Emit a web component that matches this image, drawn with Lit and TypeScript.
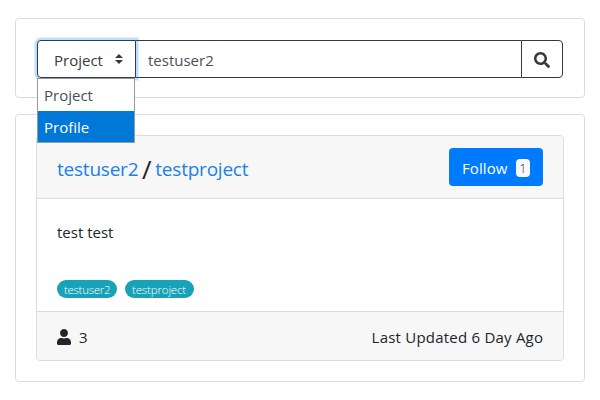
import { LitElement, html, css } from "lit";
import { customElement, property, state } from "lit/decorators.js";
import { classMap } from "lit/directives/class-map.js";

@customElement("search-bar")
class SearchBar extends LitElement {
  @property() query = "";
  @state() private selected = "Project";
  @state() private highlighted = "Profile";
  private options = ["Project", "Profile"];

  static styles = css`
    :host { display: block; }
    .group { display: flex; height: 38px; box-sizing: border-box; position: relative; color: #343a40; }
    .select {
      box-sizing: border-box; width: 99px; height: 38px; position: relative; z-index: 1;
      display: flex; align-items: center; justify-content: space-between;
      padding: 1px 11px 0 16px; border: 1px solid #343a40; border-radius: 4px 0 0 4px;
      background: #fff; box-shadow: 0 0 0 2.5px rgba(0, 123, 255, 0.25);
    }
    .arrows { width: 10px; height: 10px; margin-bottom: 2px; }
    .field {
      box-sizing: border-box; flex: 1; padding: 1px 12px 0; display: flex; align-items: center;
      border: solid #343a40; border-width: 1px 0; color: #495057;
    }
    .search {
      box-sizing: border-box; width: 42px; display: flex; align-items: center; justify-content: center;
      padding-top: 2px; border: 1px solid #343a40; border-radius: 0 4px 4px 0;
    }
    .search svg { width: 16px; height: 16px; }
    .menu {
      position: absolute; left: 0; top: 38px; width: 98px; height: 65px; z-index: 2;
      box-sizing: border-box; border: 1px solid #9299a0; background: #fff;
    }
    .option { height: 32px; line-height: 32px; padding-left: 6px; color: #495057; box-sizing: border-box; }
    .option.active { background: #0078d7; color: #fff; height: 31px; }
  `;

  render() {
    return html`<div class="group">
      <div class="select">
        <span>${this.selected}</span>
        <svg class="arrows" viewBox="0 0 4 5"><path fill="#343a40" d="M2 0L0 2h4zm0 5L0 3h4z" /></svg>
      </div>
      <div class="field"><span>${this.query}</span></div>
      <div class="search">
        <svg viewBox="0 0 512 512"><path fill="#343a40" d="M505 442.7L405.3 343c-4.500-4.500-10.600-7-17-7H372c27.600-35.300 44-79.700 44-128C416 93.100 322.900 0 208 0S0 93.100 0 208s93.100 208 208 208c48.300 0 92.700-16.400 128-44v16.300c0 6.400 2.500 12.500 7 17l99.700 99.700c9.400 9.400 24.600 9.400 33.900 0l28.300-28.300c9.400-9.400 9.400-24.600.1-34zM208 336c-70.700 0-128-57.200-128-128 0-70.700 57.200-128 128-128 70.700 0 128 57.200 128 128 0 70.700-57.200 128-128 128z" /></svg>
      </div>
      <div class="menu">
        ${this.options.map(
          (o) => html`<div class=${classMap({ option: true, active: o === this.highlighted })}
            @mouseenter=${() => (this.highlighted = o)}><span>${o}</span></div>`
        )}
      </div>
    </div>`;
  }
}

@customElement("project-card")
class ProjectCard extends LitElement {
  @property() owner = "";
  @property() name = "";
  @property() description = "";
  @property() activity = "";
  @property({ type: Number }) followers = 0;
  @property({ type: Number }) members = 0;

  static styles = css`
    :host { display: block; }
    .card { box-sizing: border-box; height: 226px; border: 1px solid #dcdcdc; border-radius: 4px; overflow: hidden; display: flex; flex-direction: column; }
    .head { box-sizing: border-box; height: 63px; padding: 0 20px; background: #f7f7f7; border-bottom: 1px solid #dcdcdc; display: flex; align-items: center; justify-content: space-between; }
    .title { display: flex; align-items: center; padding-top: 4px; font-size: 19px; }
    .title a { color: #1a80ea; letter-spacing: -0.22px; }
    .slash { width: 17px; text-align: center; font-size: 26px; line-height: 28px; }
    .follow { box-sizing: border-box; width: 94px; height: 38px; border-radius: 4px; background: #007bff; color: #fff; display: flex; align-items: center; justify-content: space-between; padding: 0 13px; }
    .follow .label { padding-top: 2px; letter-spacing: 0.1px; }
    .count { width: 14px; height: 18px; margin-top: 1px; border-radius: 4px; background: #f8f9fa; color: #212529; font-size: 12px; line-height: 19px; text-align: center; font-weight: 300; }
    .body { flex: 1; padding: 0 20px 13px; display: flex; flex-direction: column; justify-content: space-between; }
    .desc { padding-top: 21px; line-height: 24px; }
    .tags { display: flex; gap: 8px; }
    .tag { box-sizing: border-box; height: 18px; border-radius: 9px; padding: 0 7px; background: #17a2b8; color: #fff; font-size: 11.5px; line-height: 19px; letter-spacing: -0.3px; white-space: nowrap; }
    .tag:first-child { width: 60px; }
    .tag:last-child { width: 69px; letter-spacing: -0.15px; }
    .tag { font-weight: 300; }
    .foot { box-sizing: border-box; height: 49px; padding: 2px 20px 0; background: #f7f7f7; border-top: 1px solid #dcdcdc; display: flex; align-items: center; justify-content: space-between; }
    .members { display: flex; align-items: center; gap: 8px; }
    .members svg { width: 14px; height: 16px; margin-bottom: 1px; }
    .activity { letter-spacing: 0.22px; margin-right: -0.22px; }
  `;

  render() {
    return html`<div class="card">
      <div class="head">
        <div class="title"><a>${this.owner}</a><span class="slash">/</span><a>${this.name}</a></div>
        <div class="follow"><span class="label">Follow</span><span class="count">${this.followers}</span></div>
      </div>
      <div class="body">
        <div class="desc"><span>${this.description}</span></div>
        <div class="tags"><span class="tag">${this.owner}</span><span class="tag">${this.name}</span></div>
      </div>
      <div class="foot">
        <div class="members">
          <svg viewBox="0 0 448 512"><path fill="#212529" d="M224 256c70.700 0 128-57.300 128-128S294.700 0 224 0 96 57.300 96 128s57.300 128 128 128zm89.600 32h-16.700c-22.200 10.200-46.900 16-72.900 16s-50.600-5.800-72.900-16h-16.700C60.200 288 0 348.200 0 422.400V464c0 26.500 21.500 48 48 48h352c26.500 0 48-21.500 48-48v-41.600c0-74.200-60.200-134.400-134.400-134.400z" /></svg>
          <span>${this.members}</span>
        </div>
        <span class="activity">${this.activity}</span>
      </div>
    </div>`;
  }
}

@customElement("app-root")
class AppRoot extends LitElement {
  static styles = css`
    :host { display: block; box-sizing: border-box; height: 400px; padding: 18px 15px; background: #fff; color: #212529; font: 15px "Open Sans", "Noto Sans", sans-serif; }
    .panel { box-sizing: border-box; border: 1px solid #dcdcdc; border-radius: 4px; }
    .top { height: 80px; padding: 21px 21px 0; margin-bottom: 16px; }
    .results { height: 268px; padding: 20px; }
  `;

  render() {
    return html`
      <div class="panel top"><search-bar query="testuser2"></search-bar></div>
      <div class="panel results">
        <project-card owner="testuser2" name="testproject" description="test test"
          activity="Last Updated 6 Day Ago" followers="1" members="3"></project-card>
      </div>`;
  }
}
